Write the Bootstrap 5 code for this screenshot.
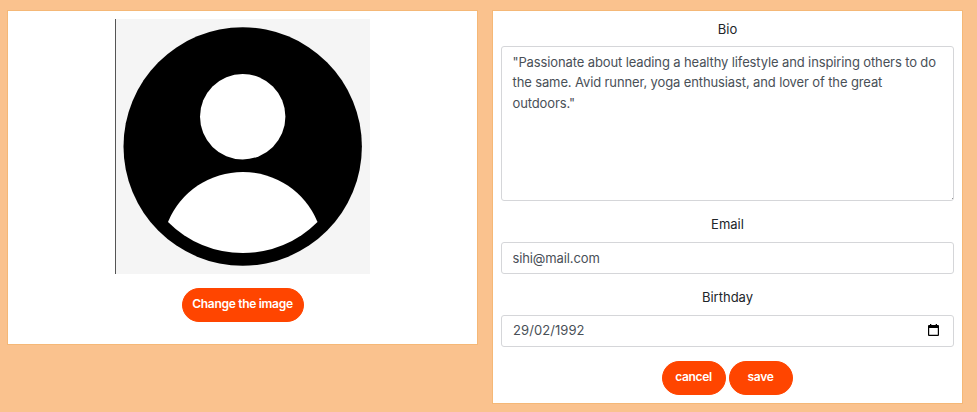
<!DOCTYPE html>
<html lang="en">
<head>
<meta charset="utf-8">
<meta name="viewport" content="width=device-width, initial-scale=1">
<title>Edit profile</title>
<link rel="stylesheet" href="https://cdn.jsdelivr.net/npm/bootstrap@5.3.0/dist/css/bootstrap.min.css">
<style>
body{background:#fac28e;font-family:Inter,Roboto,sans-serif;font-size:13px;line-height:20px;color:#212529;min-height:412px;overflow:hidden}
.profile-grid{padding:10px 14px 8px 7px;gap:14px}
.panel{border:1px solid #f5b877;background:#fff;width:471px;padding:8px}
.avatar{width:255px;height:255px}
.photo-panel{height:335px}
.form-label{height:20px;margin:0 0 7px}
.label-raised{height:19px;margin:-1px 0 9px}
.form-control{font-size:13px;line-height:20.4px;color:#495057;border:1px solid #d5d6d9;border-radius:3px;padding:5px 10.5px;height:32px;background:#fff;letter-spacing:-.12px}
textarea.form-control{height:155px;min-height:0;overflow:hidden;margin-bottom:14px;resize:none;background:linear-gradient(#888,#888) right 0 bottom 1px/1px 1px no-repeat #fff}
.email-field{margin-bottom:14px}
.date-field{padding:4px 10.500px 6px 11px;letter-spacing:.08px}
.btn-flame{--bs-btn-color:#fff;--bs-btn-bg:#ff4500;--bs-btn-border-color:#ff4500;--bs-btn-hover-color:#fff;--bs-btn-hover-bg:#e03d00;font-size:12px;font-weight:600;line-height:18px;height:34px;padding:6px 0 8px;letter-spacing:-.3px}
.btn-wide{width:122px;margin-top:14px}
.btn-small{width:64px;letter-spacing:-.35px}
.action-row{gap:3px;margin:14px 1px 0 0}
</style>
<script src="https://cdn.jsdelivr.net/npm/bootstrap@5.3.0/dist/js/bootstrap.bundle.min.js"></script>
</head>
<body>
<main class="profile-grid d-flex align-items-start">
  <section class="panel photo-panel d-flex flex-column align-items-center">
    <svg class="avatar" viewBox="0 0 255 255" role="img" aria-label="Avatar">
      <path fill="#f5f5f5" d="M0 0h255v255H0z"/>
      <path fill="#555" d="M0 0h1v255H0z"/>
      <circle cx="127.7" cy="127.5" r="119.2"/>
      <circle cx="127.7" cy="97.7" r="42.7" fill="#fff"/>
      <path fill="#fff" d="M53 203A80.8 80.8 0 0 1 202.500 203A105.500 105.500 0 0 1 53 203Z"/>
    </svg>
    <button type="button" class="btn btn-flame btn-wide rounded-pill">Change the image</button>
  </section>
  <form class="panel text-center">
    <label class="form-label d-block" for="bio">Bio</label>
    <textarea class="form-control" id="bio">"Passionate about leading a healthy lifestyle and inspiring others to do
the same. Avid runner, yoga enthusiast, and lover of the great
outdoors."</textarea>
    <label class="form-label label-raised d-block" for="email">Email</label>
    <input class="form-control email-field" id="email" type="text" value="sihi@mail.com">
    <label class="form-label label-raised d-block">Birthday</label>
    <div class="form-control date-field d-flex align-items-center justify-content-between">
      <span>29/02/1992</span>
      <svg class="me-1" width="11" height="12" viewBox="0 0 11 12" aria-hidden="true"><path fill-rule="evenodd" d="M1 1h1V0h1.300v1h4.400V0H9v1h1a1 1 0 0 1 1 1v9a1 1 0 0 1-1 1H1a1 1 0 0 1-1-1V2a1 1 0 0 1 1-1zM1.200 4v6.800h8.600V4z"/></svg>
    </div>
    <div class="d-flex justify-content-center action-row">
      <button type="button" class="btn btn-flame btn-small rounded-pill">cancel</button>
      <button type="button" class="btn btn-flame btn-small rounded-pill">save</button>
    </div>
  </form>
</main>
</body>
</html>
